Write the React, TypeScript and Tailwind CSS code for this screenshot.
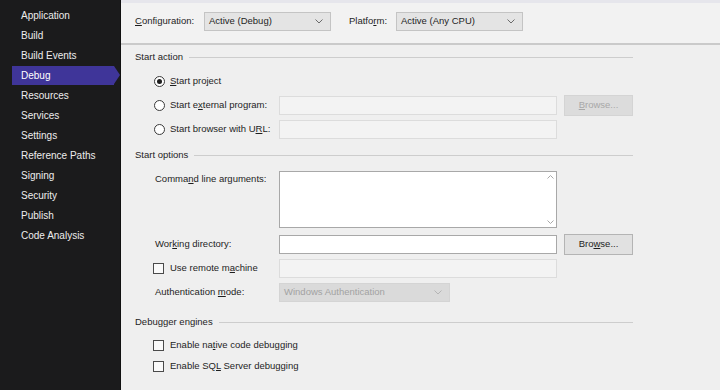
import type { ReactNode } from 'react';

const navItems = [
  'Application',
  'Build',
  'Build Events',
  'Debug',
  'Resources',
  'Services',
  'Settings',
  'Reference Paths',
  'Signing',
  'Security',
  'Publish',
  'Code Analysis',
];

function Chevron({ color = '#6b6b6b' }: { color?: string }) {
  return (
    <svg width="8" height="5" viewBox="0 0 8 5" fill="none">
      <path d="M0.5 0.5 L4 4 L7.5 0.5" stroke={color} strokeWidth="1" />
    </svg>
  );
}

function Select({ value, width, disabled }: { value: string; width: string; disabled?: boolean }) {
  return (
    <div
      className={`${width} h-[19px] flex items-center justify-between pl-[4px] pr-[7px] border ${
        disabled ? 'bg-[#dadada] border-[#d4d4d4] text-[#a2a2a2]' : 'bg-[#e4e4e4] border-[#c4c4c4] text-[#1e1e1e]'
      }`}
    >
      <span>{value}</span>
      <Chevron color={disabled ? '#b5b5b5' : '#6b6b6b'} />
    </div>
  );
}

function SectionHeader({ title }: { title: string }) {
  return (
    <div className="flex items-center h-[16px]">
      <span>{title}</span>
      <div className="flex-1 h-px bg-[#cdcdcd] ml-[6px]" />
    </div>
  );
}

function Radio({ checked }: { checked?: boolean }) {
  return (
    <div className="w-[11px] h-[11px] rounded-full border border-[#3a3a3a] bg-white flex items-center justify-center">
      {checked && <div className="w-[5px] h-[5px] rounded-full bg-[#1e1e1e]" />}
    </div>
  );
}

function Checkbox() {
  return <div className="w-[11px] h-[11px] border border-[#4a4a4a] bg-[#fafafa]" />;
}

function TextBox({ disabled, className = '' }: { disabled?: boolean; className?: string }) {
  return (
    <div
      className={`w-[278px] h-[19px] border ${
        disabled ? 'bg-[#f3f3f3] border-[#dcdcdc]' : 'bg-white border-[#a8a8a8]'
      } ${className}`}
    />
  );
}

function Button({ label, disabled }: { label: ReactNode; disabled?: boolean }) {
  return (
    <div
      className={`w-[69px] h-[21px] flex items-center justify-center border ${
        disabled ? 'bg-[#dcdcdc] border-[#d4d4d4] text-[#a8a8a8]' : 'bg-[#e1e1e1] border-[#b4b4b4] text-[#1e1e1e]'
      }`}
    >
      {label}
    </div>
  );
}

function U({ children }: { children: ReactNode }) {
  return <span className="underline underline-offset-[1px]">{children}</span>;
}

export default function App() {
  return (
    <div
      className="w-[720px] h-[390px] flex overflow-hidden text-[9.5px] text-[#1e1e1e]"
      style={{ fontFamily: '"Liberation Sans", Arial, sans-serif' }}
    >
      {/* Sidebar */}
      <div className="w-[121px] h-full bg-[#1b1b1c] border-r border-[#101010] pt-[5px] flex flex-col text-[10px]">
        {navItems.map((item) => {
          const active = item === 'Debug';
          return (
            <div key={item} className="h-[20px] flex items-center pl-[12px]">
              {active ? (
                <>
                  <div className="flex-1 h-[19px] bg-[#3f3599] text-white flex items-center pl-[9px]">{item}</div>
                  <div className="w-0 h-0 border-y-[9px] border-y-transparent border-l-[6px] border-l-[#3f3599]" />
                </>
              ) : (
                <span className="pl-[9px] text-[#ededed]">{item}</span>
              )}
            </div>
          );
        })}
      </div>

      {/* Main */}
      <div className="flex-1 h-full bg-[#efefef] flex flex-col">
        <div className="h-[3px] bg-[#e6e6ec]" />
        <div className="h-[42px] bg-[#f2f2f2] border-b-2 border-[#cacaca] flex items-center pl-[14px] pb-[3px]">
          <span className="w-[69px]">
            <U>C</U>onfiguration:
          </span>
          <Select value="Active (Debug)" width="w-[127px]" />
          <span className="ml-[18px] w-[47px]">
            Platfo<U>r</U>m:
          </span>
          <Select value="Active (Any CPU)" width="w-[127px]" />
        </div>

        <div className="w-[512px] pl-[14px] pt-[4px] flex flex-col">
          <SectionHeader title="Start action" />

          <div className="mt-[4px] h-[24px] flex items-center pl-[19px]">
            <Radio checked />
            <span className="ml-[5px]">
              <U>S</U>tart project
            </span>
          </div>
          <div className="h-[24px] flex items-center pl-[19px]">
            <Radio />
            <span className="ml-[5px] w-[109px]">
              Start e<U>x</U>ternal program:
            </span>
            <TextBox disabled />
            <div className="ml-[7px]">
              <Button label={<><U>B</U>rowse...</>} disabled />
            </div>
          </div>
          <div className="h-[24px] flex items-center pl-[19px]">
            <Radio />
            <span className="ml-[5px] w-[109px]">
              Start browser with U<U>R</U>L:
            </span>
            <TextBox disabled />
          </div>

          <div className="mt-[6px]">
            <SectionHeader title="Start options" />
          </div>

          <div className="mt-[8px] flex pl-[20px]">
            <span className="w-[124px] pt-[1px]">
              Comma<U>n</U>d line arguments:
            </span>
            <div className="w-[278px] h-[57px] bg-white border border-[#a8a8a8] flex justify-end">
              <div className="w-[12px] flex flex-col items-center justify-between py-[3px]">
                <svg width="7" height="4" viewBox="0 0 7 4" fill="none">
                  <path d="M0.5 3.5 L3.5 0.5 L6.5 3.5" stroke="#a8a8a8" />
                </svg>
                <svg width="7" height="4" viewBox="0 0 7 4" fill="none">
                  <path d="M0.5 0.5 L3.5 3.5 L6.5 0.5" stroke="#a8a8a8" />
                </svg>
              </div>
            </div>
          </div>

          <div className="mt-[6px] h-[21px] flex items-center pl-[20px]">
            <span className="w-[124px]">
              Wor<U>k</U>ing directory:
            </span>
            <TextBox />
            <div className="ml-[7px]">
              <Button label={<>Bro<U>w</U>se...</>} />
            </div>
          </div>

          <div className="mt-[4px] h-[18px] flex items-center pl-[18px]">
            <Checkbox />
            <span className="ml-[6px] w-[109px]">
              Use remote m<U>a</U>chine
            </span>
            <TextBox disabled className="h-[17px]" />
          </div>

          <div className="mt-[6px] h-[18px] flex items-center pl-[20px]">
            <span className="w-[124px]">
              Authentication <U>m</U>ode:
            </span>
            <Select value="Windows Authentication" width="w-[171px]" disabled />
          </div>

          <div className="mt-[13px]">
            <SectionHeader title="Debugger engines" />
          </div>

          <div className="mt-[5px] h-[20px] flex items-center pl-[18px]">
            <Checkbox />
            <span className="ml-[6px]">
              Enable na<U>t</U>ive code debugging
            </span>
          </div>
          <div className="mt-[1px] h-[20px] flex items-center pl-[18px]">
            <Checkbox />
            <span className="ml-[6px]">
              Enable SQ<U>L</U> Server debugging
            </span>
          </div>
        </div>
      </div>
    </div>
  );
}
